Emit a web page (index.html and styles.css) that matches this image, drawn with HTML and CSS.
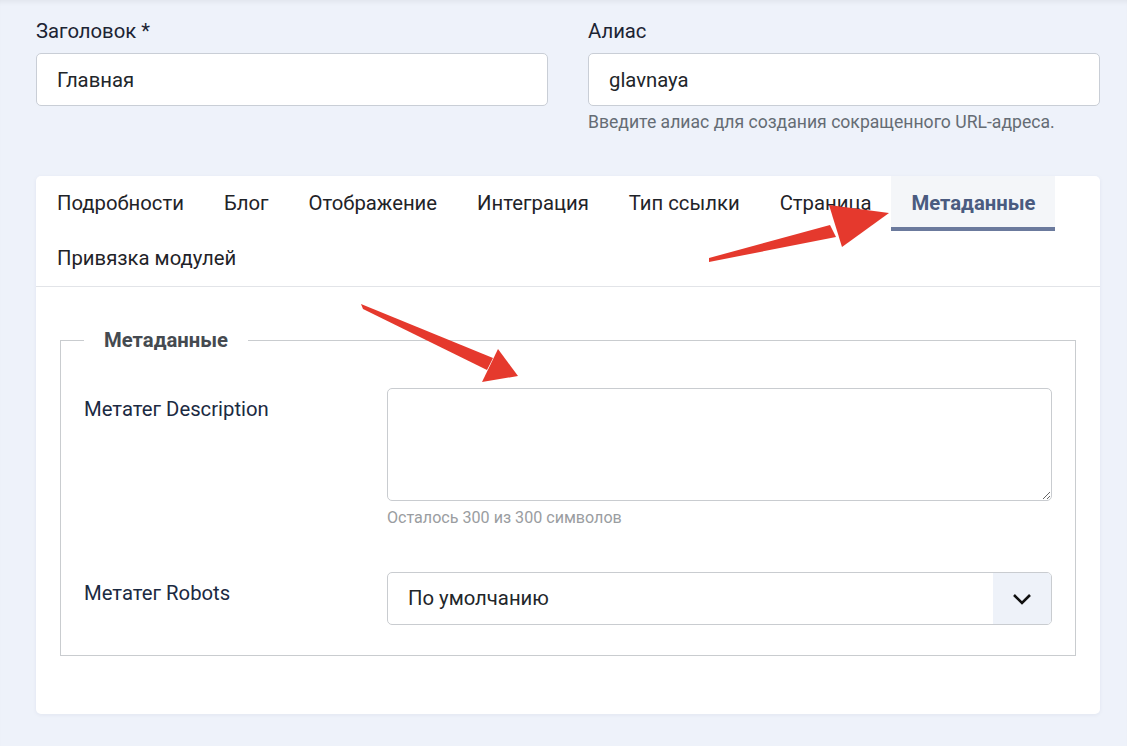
FILE: index.html
```html
<!DOCTYPE html>
<html lang="ru">
<head>
<meta charset="utf-8">
<title>Метаданные</title>
<link rel="stylesheet" href="styles.css">
</head>
<body>
<div class="page">
  <div class="top-row">
    <div class="field">
      <label class="field-label">Заголовок *</label>
      <input class="text-input" type="text" value="Главная">
    </div>
    <div class="field">
      <label class="field-label">Алиас</label>
      <input class="text-input" type="text" value="glavnaya">
      <div class="hint">Введите алиас для создания сокращенного URL-адреса.</div>
    </div>
  </div>

  <div class="card">
    <ul class="tabs">
      <li class="tab">Подробности</li>
      <li class="tab">Блог</li>
      <li class="tab">Отображение</li>
      <li class="tab">Интеграция</li>
      <li class="tab">Тип ссылки</li>
      <li class="tab">Страница</li>
      <li class="tab active">Метаданные</li>
      <li class="tab">Привязка модулей</li>
    </ul>
    <div class="card-body">
      <fieldset class="options">
        <legend class="legend">Метаданные</legend>
        <div class="control-row">
          <label class="control-label">Метатег Description</label>
          <div class="controls">
            <textarea class="textarea"></textarea>
            <div class="counter">Осталось 300 из 300 символов</div>
          </div>
        </div>
        <div class="control-row second">
          <label class="control-label">Метатег Robots</label>
          <div class="controls">
            <div class="select">
              <span class="select-value">По умолчанию</span>
              <span class="select-btn">
                <svg width="20" height="12" viewBox="0 0 20 12"><path d="M2 2 L10 10 L18 2" fill="none" stroke="#111" stroke-width="2.6" stroke-linecap="butt" stroke-linejoin="miter"/></svg>
              </span>
            </div>
          </div>
        </div>
      </fieldset>
    </div>
  </div>

  <svg class="annotations" width="1127" height="746" viewBox="0 0 1127 746">
    <polygon points="709,258 709,262 836,237 830,225" fill="#e5392d"/>
    <polygon points="889,213 829,205 842,247" fill="#e5392d"/>
    <polygon points="361,304 363,309 487,370 493,358" fill="#e5392d"/>
    <polygon points="518,376 498,349 482,382" fill="#e5392d"/>
  </svg>
</div>
</body>
</html>
```

FILE: styles.css
```css
* { box-sizing: border-box; }

html, body {
  margin: 0;
  padding: 0;
}

body {
  background: #eef2fa;
  font-family: Roboto, "Noto Sans", "Liberation Sans", sans-serif;
  color: #22262a;
  width: 1127px;
  height: 746px;
  overflow: hidden;
}

.page {
  position: relative;
  height: 746px;
  padding: 18px 27px 0 36px;
  box-shadow: inset 0 5px 5px -3px rgba(0, 0, 0, 0.06);
}

.top-row {
  display: grid;
  grid-template-columns: 1fr 1fr;
  column-gap: 40px;
}

.field-label {
  display: block;
  font-size: 20.3px;
  line-height: 27px;
  margin-bottom: 8px;
  color: #1c2433;
}

.text-input {
  display: block;
  width: 100%;
  height: 53px;
  padding: 0 20px;
  border: 1px solid #c9ced6;
  border-radius: 5px;
  background: #fff;
  font-family: inherit;
  font-size: 20.3px;
  color: #22262a;
  outline: none;
}

.hint {
  margin-top: 4px;
  font-size: 17.6px;
  line-height: 24px;
  color: #656c74;
}

.card {
  margin-top: 42px;
  background: #fff;
  border-radius: 5px;
  box-shadow: 0 1px 4px rgba(30, 40, 80, 0.06);
}

.tabs {
  list-style: none;
  margin: 0;
  padding: 0 0 0 1px;
  display: flex;
  flex-wrap: wrap;
  border-bottom: 1px solid #e2e4e8;
}

.tab {
  height: 55px;
  line-height: 55px;
  padding: 0 20px;
  font-size: 20.3px;
  color: #1f2328;
  white-space: nowrap;
}

.tab.active {
  background: #f4f6f9;
  color: #4a5b80;
  font-weight: 700;
  box-shadow: inset 0 -4px 0 #6b7a9d;
}

.card-body {
  padding: 40px 24px 58px;
}

.options {
  margin: 0;
  padding: 34px 23px 30px;
  border: 1px solid #c9cccf;
}

.legend {
  padding: 0 20px;
  font-size: 20.3px;
  line-height: 27px;
  font-weight: 700;
  color: #454a50;
}

.control-row {
  display: grid;
  grid-template-columns: 303px 1fr;
}

.control-row.second {
  margin-top: 44px;
}

.control-label {
  padding-top: 8px;
  font-size: 20.3px;
  line-height: 27px;
  color: #1b2a42;
}

.textarea {
  display: block;
  width: 100%;
  height: 113px;
  border: 1px solid #c9ccd0;
  border-radius: 5px;
  background: #fff;
  font-family: inherit;
  font-size: 20.3px;
  padding: 10px 20px;
  outline: none;
}

.counter {
  margin-top: 6px;
  font-size: 16.1px;
  line-height: 21px;
  color: #9a9da1;
}

.select {
  display: flex;
  height: 53px;
  border: 1px solid #c9ccd0;
  border-radius: 5px;
  overflow: hidden;
  background: #fff;
}

.select-value {
  flex: 1;
  padding-left: 20px;
  font-size: 20.3px;
  line-height: 51px;
  color: #22262a;
}

.select-btn {
  width: 58px;
  background: #eef2f9;
  display: flex;
  align-items: center;
  justify-content: center;
}

.annotations {
  position: absolute;
  top: 0;
  left: 0;
  pointer-events: none;
}
```
